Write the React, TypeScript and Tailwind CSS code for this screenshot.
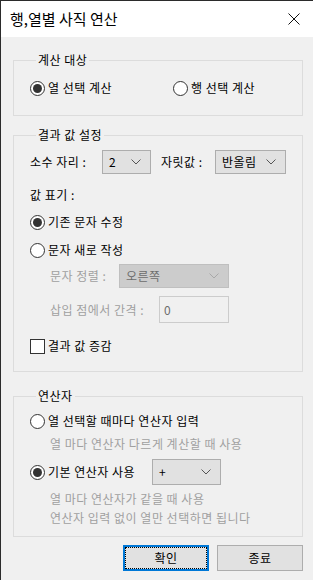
import React from "react";

const font = { fontFamily: '"Noto Sans CJK KR", "Noto Sans", sans-serif' };

function Chevron({ color = "#444" }: { color?: string }) {
  return (
    <svg width="10" height="6" viewBox="0 0 10 6" className="shrink-0">
      <polyline points="0.5,0.5 5,5 9.5,0.5" fill="none" stroke={color} strokeWidth="1" />
    </svg>
  );
}

function Radio({ checked, label }: { checked?: boolean; label: string }) {
  return (
    <div className="flex items-center h-[16px]">
      <span className="w-[15px] h-[15px] rounded-full border border-[#333] bg-white flex items-center justify-center shrink-0">
        {checked && <span className="w-[9px] h-[9px] rounded-full bg-[#333]" />}
      </span>
      <span className="ml-[3px] text-[12px] leading-[16px] text-black whitespace-nowrap">{label}</span>
    </div>
  );
}

function Select({ value, width, disabled }: { value: string; width: string; disabled?: boolean }) {
  return (
    <div
      className={`${width} flex items-center justify-between pl-[6px] pr-[9px] border ${
        disabled ? "bg-[#cccccc] border-[#bfbfbf] text-[#6d6d6d]" : "bg-[#e1e1e1] border-[#adadad] text-black"
      }`}
    >
      <span className="text-[12px] leading-[16px]">{value}</span>
      <Chevron color={disabled ? "#a8a8a8" : "#555"} />
    </div>
  );
}

function Legend({ children }: { children: React.ReactNode }) {
  return <legend className="ml-[6px] px-[2px] text-[12px] leading-[16px] text-black">{children}</legend>;
}

export default function App() {
  return (
    <div
      className="w-[313px] h-[580px] bg-[#f0f0f0] border-l border-[#2b2b2b] flex flex-col overflow-hidden"
      style={font}
    >
      {/* title bar */}
      <div className="h-[37px] bg-white border-t border-[#2b2b2b] flex items-center justify-between pl-[9px] pr-[13px] shrink-0">
        <span className="text-[15px] leading-[20px] text-black">행,열별 사직 연산</span>
        <svg width="12" height="12" viewBox="0 0 12 12">
          <path d="M0.5 0.5 L11.5 11.5 M11.5 0.5 L0.5 11.5" stroke="#111" strokeWidth="1" />
        </svg>
      </div>

      <div className="pl-[12px] w-[302px] tracking-[0.5px]">
        {/* 계산 대상 */}
        <fieldset className="mt-[15px] w-[290px] border border-[#dcdcdc] pl-[16px] pt-[12px] pb-[19px]">
          <Legend>계산 대상</Legend>
          <div className="flex">
            <div className="w-[143px]">
              <Radio checked label="열 선택 계산" />
            </div>
            <Radio label="행 선택 계산" />
          </div>
        </fieldset>

        {/* 결과 값 설정 */}
        <fieldset className="mt-[11px] w-[290px] border border-[#dcdcdc] pl-[16px] pt-[7px] pb-[17px]">
          <Legend>결과 값 설정</Legend>
          <div className="flex items-center text-[12px] leading-[16px]">
            <span className="w-[72px]">소수 자리 :</span>
            <Select value="2" width="w-[49px] h-[24px]" />
            <span className="ml-[10px] w-[54px]">자릿값 :</span>
            <Select value="반올림" width="w-[71px] h-[24px]" />
          </div>
          <div className="mt-[13px] text-[12px] leading-[16px]">값 표기 :</div>
          <div className="mt-[11px]">
            <Radio checked label="기존 문자 수정" />
          </div>
          <div className="mt-[12px]">
            <Radio label="문자 새로 작성" />
          </div>
          <div className="mt-[6px] pl-[20px] flex items-center text-[12px] leading-[16px] text-[#a0a0a0]">
            <span className="w-[69px]">문자 정렬 :</span>
            <Select value="오른쪽" width="w-[110px] h-[24px]" disabled />
          </div>
          <div className="mt-[8px] pl-[20px] flex items-center text-[12px] leading-[16px] text-[#a0a0a0]">
            <span className="w-[109px]">삽입 점에서 간격 :</span>
            <div className="w-[70px] h-[27px] border border-[#cccccc] bg-[#f0f0f0] flex items-center pl-[4px] text-[#6d6d6d]">
              0
            </div>
          </div>
          <div className="mt-[15px] flex items-center h-[16px]">
            <span className="w-[15px] h-[15px] border border-[#333] bg-white shrink-0" />
            <span className="ml-[3px] text-[12px] leading-[16px]">결과 값 증감</span>
          </div>
        </fieldset>

        {/* 연산자 */}
        <fieldset className="mt-[16px] w-[290px] border border-[#dcdcdc] pl-[16px] pt-[9px] pb-[10px]">
          <Legend>연산자</Legend>
          <Radio label="열 선택할 때마다 연산자 입력" />
          <div className="mt-[7px] pl-[20px] text-[12px] leading-[16px] text-[#a0a0a0]">
            열 마다 연산자 다르게 계산할 때 사용
          </div>
          <div className="mt-[7px] flex items-center">
            <div className="w-[122px]">
              <Radio checked label="기본 연산자 사용" />
            </div>
            <Select value="+" width="w-[69px] h-[26px]" />
          </div>
          <div className="mt-[6px] pl-[20px] text-[12px] leading-[16px] text-[#a0a0a0]">
            열 마다 연산자가 같을 때 사용
          </div>
          <div className="mt-[3px] pl-[20px] text-[12px] leading-[16px] text-[#a0a0a0]">
            연산자 입력 없이 열만 선택하면 됩니다
          </div>
        </fieldset>

        {/* buttons */}
        <div className="mt-[8px] flex justify-end gap-[8px]">
          <div className="w-[86px] h-[26px] border-2 border-[#0078d7] bg-[#e1e1e1]">
            <div className="h-full border border-dotted border-black flex items-center justify-center text-[12px] leading-[16px]">
              확인
            </div>
          </div>
          <div className="w-[86px] h-[26px] border border-[#adadad] bg-[#e1e1e1] flex items-center justify-center text-[12px] leading-[16px]">
            종료
          </div>
        </div>
      </div>
    </div>
  );
}
